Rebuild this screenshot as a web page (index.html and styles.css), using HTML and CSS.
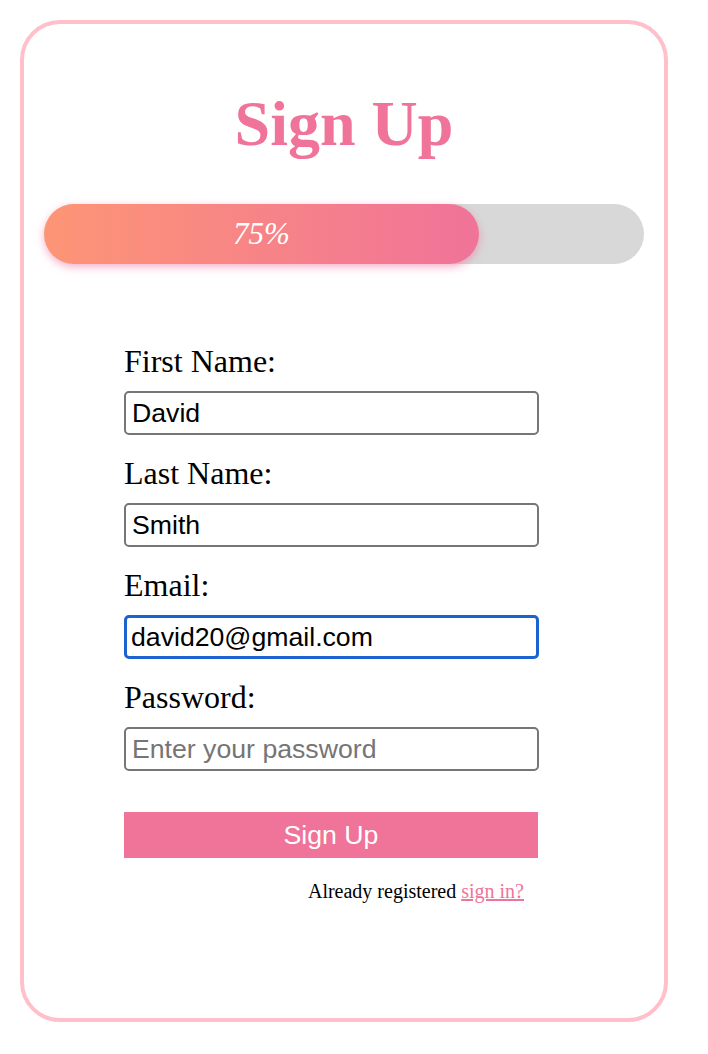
FILE: index.html
```html
<!DOCTYPE html>
<html lang="en">
<head>
<meta charset="utf-8">
<title>Sign Up</title>
<link rel="stylesheet" href="styles.css">
</head>
<body>
<div class="card">
  <h1 class="title">Sign Up</h1>
  <div class="track">
    <div class="fill" style="width: 72.5%;">75%</div>
  </div>
  <form class="form">
    <div class="field">
      <label class="label" for="first">First Name:</label>
      <input class="input" id="first" type="text" value="David">
    </div>
    <div class="field">
      <label class="label" for="last">Last Name:</label>
      <input class="input" id="last" type="text" value="Smith">
    </div>
    <div class="field">
      <label class="label" for="email">Email:</label>
      <input class="input input-focus" id="email" type="text" value="david20@gmail.com">
    </div>
    <div class="field">
      <label class="label" for="pw">Password:</label>
      <input class="input" id="pw" type="password" placeholder="Enter your password">
    </div>
    <button class="submit" type="button">Sign Up</button>
    <p class="signin">Already registered <a class="signin-link" href="#">sign in?</a></p>
  </form>
</div>
</body>
</html>
```

FILE: styles.css
```css
html, body {
  margin: 0;
  padding: 0;
  background: #ffffff;
}

body {
  padding: 20px;
  font-family: "Liberation Serif", "Times New Roman", serif;
  color: #000000;
}

.card {
  box-sizing: border-box;
  width: 648px;
  height: 1002px;
  border: 4px solid #ffc0cb;
  border-radius: 40px;
  padding: 20px;
}

.title {
  margin: 43px 0 43px;
  font-size: 64px;
  line-height: 74px;
  font-weight: bold;
  color: #f07399;
  text-align: center;
}

.track {
  height: 60px;
  border-radius: 30px;
  background: #d8d8d8;
}

.fill {
  height: 100%;
  border-radius: 30px;
  background: linear-gradient(90deg, #fd9575 0%, #f07399 100%);
  box-shadow: 0 3px 9px rgba(240, 110, 160, 0.55);
  display: flex;
  align-items: center;
  justify-content: center;
  color: #ffffff;
  font-style: italic;
  font-size: 31px;
}

.form {
  margin: 79px 0 0;
  padding-left: 80px;
}

.field {
  display: flex;
  flex-direction: column;
  align-items: flex-start;
  gap: 11px;
  margin-bottom: 20px;
}

.label {
  font-size: 32px;
  line-height: 37px;
}

.input {
  box-sizing: border-box;
  width: 415px;
  height: 44px;
  margin: 0;
  padding: 0 6px;
  border: 2px solid #767676;
  border-radius: 5px;
  font-family: "Liberation Sans", Arial, sans-serif;
  font-size: 26.67px;
  color: #000000;
  background: #ffffff;
  outline: none;
}

.input::placeholder {
  color: #757575;
}

.input-focus {
  border: 3px solid #1a63d0;
  padding: 0 4px;
}

.submit {
  display: block;
  width: 414px;
  height: 46px;
  margin: 41px 0 0;
  padding: 0;
  border: none;
  background: #f07399;
  color: #ffffff;
  font-family: "Liberation Sans", Arial, sans-serif;
  font-size: 26.67px;
}

.signin {
  width: 414px;
  box-sizing: border-box;
  margin: 22px 0 0;
  padding-right: 14px;
  font-size: 20px;
  line-height: 23px;
  text-align: right;
}

.signin-link {
  color: #f07399;
  text-decoration: underline;
}
```
